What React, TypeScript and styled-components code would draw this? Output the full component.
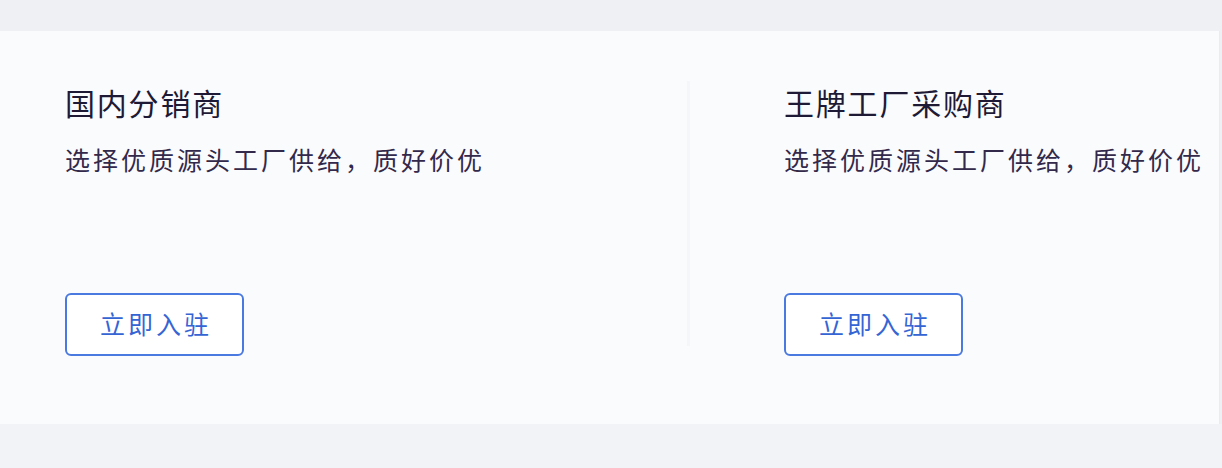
import React from "react";
import styled, { createGlobalStyle } from "styled-components";

const Global = createGlobalStyle`
  html, body { margin: 0; padding: 0; }
  body {
    background: #eef0f3;
    font-family: "Noto Sans CJK SC", "Noto Sans", sans-serif;
  }
`;

const Page = styled.div`
  width: 1222px;
  height: 468px;
  display: flex;
  flex-direction: column;
  background: #eef0f3;
`;

const TopBand = styled.div`
  height: 31px;
  flex: none;
  background: #eef0f3;
`;

const Card = styled.section`
  height: 393px;
  flex: none;
  width: 1220px;
  box-sizing: border-box;
  background: #fafbfd;
  border-right: 1px solid #e9ecf1;
  display: grid;
  grid-template-columns: 689px 1fr;
  align-items: stretch;
`;

const BottomBand = styled.div`
  flex: 1;
  background: #f2f3f6;
`;

const Column = styled.div<{ $divider?: boolean }>`
  position: relative;
  box-sizing: border-box;
  padding: 53px 0 0 ${(p) => (p.$divider ? 95 : 65)}px;
  display: flex;
  flex-direction: column;
  align-items: flex-start;
  ${(p) =>
    p.$divider &&
    `&::before {
      content: "";
      position: absolute;
      left: -2px;
      top: 50px;
      height: 265px;
      width: 3px;
      background: #f4f6fa;
    }`}
`;

const Title = styled.h2`
  margin: 0;
  font-size: 30px;
  line-height: 36px;
  font-weight: 400;
  color: #1e1a35;
  letter-spacing: 1.8px;
`;

const Desc = styled.p`
  margin: 22px 0 0;
  font-size: 25px;
  line-height: 34px;
  font-weight: 400;
  color: #33294a;
  letter-spacing: 3px;
  white-space: nowrap;
`;

const JoinButton = styled.button`
  margin-top: 117px;
  width: 179px;
  height: 63px;
  box-sizing: border-box;
  border: 2px solid #4a7ae0;
  border-radius: 6px;
  background: #ffffff;
  color: #3565d4;
  font-family: "Noto Sans CJK SC", "Noto Sans", sans-serif;
  font-size: 25px;
  letter-spacing: 3px;
  padding: 0 0 4px 3px;
  cursor: pointer;
`;

const items = [
  { title: "国内分销商", desc: "选择优质源头工厂供给，质好价优" },
  { title: "王牌工厂采购商", desc: "选择优质源头工厂供给，质好价优" },
];

export default function App() {
  return (
    <>
      <Global />
      <Page>
        <TopBand />
        <Card>
          {items.map((it, i) => (
            <Column key={i} $divider={i > 0}>
              <Title>{it.title}</Title>
              <Desc>{it.desc}</Desc>
              <JoinButton>立即入驻</JoinButton>
            </Column>
          ))}
        </Card>
        <BottomBand />
      </Page>
    </>
  );
}
